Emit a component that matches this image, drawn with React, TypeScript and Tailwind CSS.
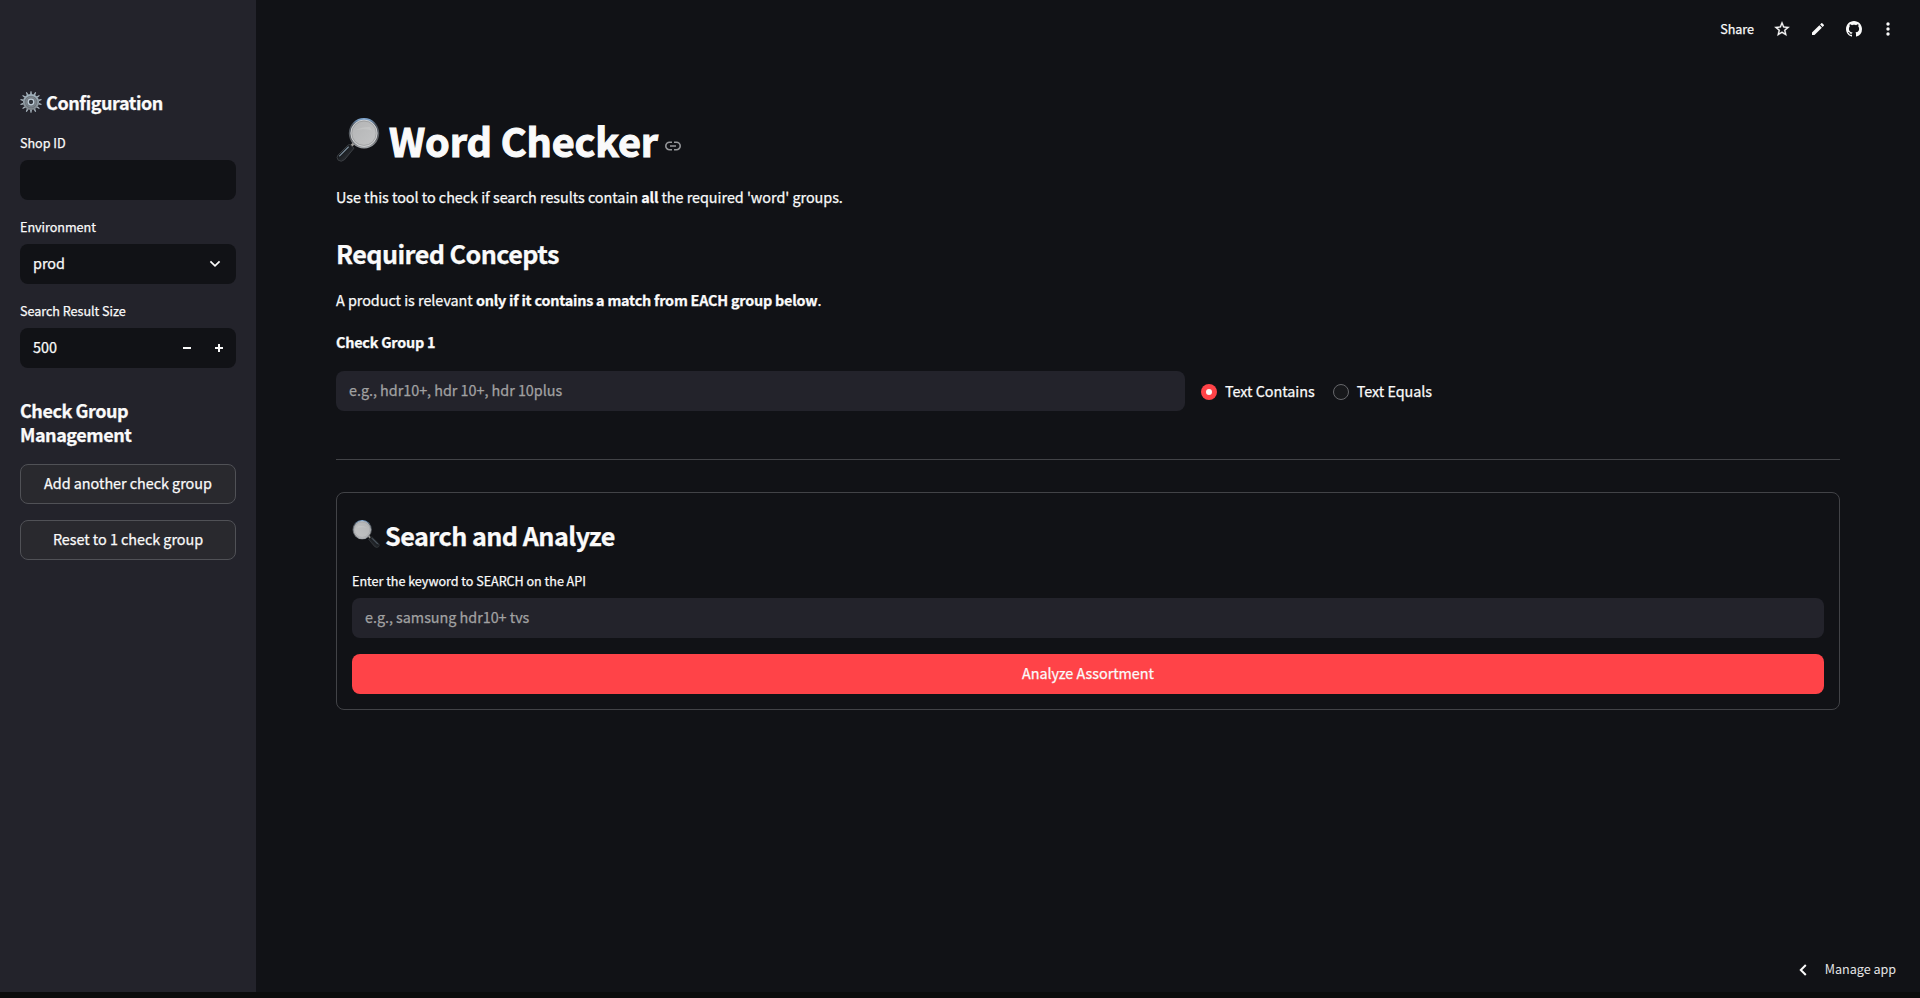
import React from "react";

const TEXT = "font-['Noto_Sans_CJK_SC','Noto_Sans_CJK_JP',sans-serif] [-webkit-text-stroke:0.25px] tracking-[-0.035px]";

function Magnifier({ id, className, flip = false }: { id: string; className: string; flip?: boolean }) {
  return (
    <svg viewBox="0 0 44 44" className={className} aria-hidden="true">
      <defs>
        <linearGradient id={`${id}-rim`} x1="0" y1="0" x2="0" y2="1">
          <stop offset="0" stopColor="#7fa6cf" />
          <stop offset="0.2" stopColor="#4d555f" />
          <stop offset="0.7" stopColor="#5d6064" />
          <stop offset="1" stopColor="#a0a3a7" />
        </linearGradient>
        <linearGradient id={`${id}-glass`} x1="0" y1="0" x2="1" y2="1">
          <stop offset="0" stopColor="#b2b3b4" />
          <stop offset="1" stopColor="#c4c5c6" />
        </linearGradient>
        <linearGradient id={`${id}-grip`} x1="0" y1="0" x2="1" y2="1">
          <stop offset="0" stopColor="#6a7682" />
          <stop offset="0.35" stopColor="#15181c" />
          <stop offset="1" stopColor="#3c3f44" />
        </linearGradient>
      </defs>
      <g transform={flip ? "matrix(-1 0 0 1 44 0)" : undefined}>
        <path d="M18.5 24.5 L13.5 30" stroke="#a09d99" strokeWidth="2.6" />
        <path d="M14.6 27 L18 30.2 L8.6 41.6 Q5.2 44.6 2.2 42.2 Q0 39.4 2 37 L12.2 27 Q13.4 26.2 14.6 27Z" fill={`url(#${id}-grip)`} stroke="#3d4145" strokeWidth="0.9" />
        <path d="M3.6 37.8 L12.4 29" stroke="#7f919f" strokeWidth="1.1" strokeLinecap="round" />
        <circle cx="28" cy="15.2" r="14.2" fill={`url(#${id}-glass)`} stroke={`url(#${id}-rim)`} strokeWidth="2" />
        <circle cx="28" cy="15.2" r="13.2" fill="none" stroke="#dedfe1" strokeWidth="0.7" />
        <circle cx="28" cy="15.2" r="12.2" fill="none" stroke="#8f9092" strokeWidth="0.6" />
        <path d="M20 12.2 Q26 8.6 34 9 L36 12.5 Q27 10.4 20 12.2Z" fill="#c8c9c9" opacity="0.6" />
      </g>
    </svg>
  );
}

function Gear() {
  const teeth = Array.from({ length: 14 }, (_, i) => (i * 360) / 14);
  return (
    <svg viewBox="0 0 22 22" className="h-[22px] w-[22px] shrink-0" aria-hidden="true">
      <defs>
        <linearGradient id="gear-body" x1="0" y1="0" x2="0" y2="1">
          <stop offset="0" stopColor="#a3b4bf" />
          <stop offset="1" stopColor="#80878d" />
        </linearGradient>
      </defs>
      {teeth.map((a) => (
        <path key={a} d="M10.1 3.2 L10.5 0.2 H11.5 L11.9 3.2Z" fill="#a9b5be" transform={`rotate(${a} 11 11)`} />
      ))}
      <circle cx="11" cy="11" r="7.2" fill="#6b737b" stroke="url(#gear-body)" strokeWidth="1.8" />
      <circle cx="11" cy="11" r="4.9" fill="none" stroke="#868e96" strokeWidth="0.8" />
      <circle cx="11" cy="11" r="2.8" fill="#30343c" stroke="#bccad5" strokeWidth="1.3" />
    </svg>
  );
}

function Label({ children }: { children: React.ReactNode }) {
  return <div className="mb-1 h-6 text-[12.6px] leading-[21px]">{children}</div>;
}

export default function App() {
  return (
    <div className={`flex h-[998px] w-[1920px] flex-col overflow-hidden bg-[#0b0c0c] text-[#fafafa] ${TEXT}`}>
      <div className="flex h-[992px] bg-[#111216]">
        <aside className="w-64 shrink-0 bg-[#23232b] px-5 pt-[90px]">
          <h2 className="flex h-6 items-center gap-1 text-[18px] leading-6 font-bold tracking-[-0.42px]">
            <Gear />
            <span>Configuration</span>
          </h2>
          <div className="mt-[18px]">
            <Label>Shop ID</Label>
            <div className="h-10 rounded-lg bg-[#111216]" />
          </div>
          <div className="mt-4">
            <Label>Environment</Label>
            <div className="flex h-10 items-center justify-between rounded-lg bg-[#111216] pr-[15px] pl-[13px] text-[14.4px] leading-6">
              <span className="mb-0.5">prod</span>
              <svg viewBox="0 0 12 8" className="h-2 w-3" fill="none" stroke="#fafafa" strokeWidth="1.7">
                <path d="M1.4 1.3 L6 5.9 L10.6 1.3" />
              </svg>
            </div>
          </div>
          <div className="mt-4">
            <Label>Search Result Size</Label>
            <div className="flex h-10 items-center rounded-lg bg-[#111216] pr-[13px] pl-[13px] text-[14.4px] leading-6">
              <span className="mb-0.5 flex-1">500</span>
              <svg viewBox="0 0 8 8" className="mr-6 h-2 w-2" fill="#fafafa">
                <path d="M0 3h8v2H0z" />
              </svg>
              <svg viewBox="0 0 8 8" className="h-2 w-2" fill="#fafafa">
                <path d="M0 3h3V0h2v3h3v2H5v3H3V5H0z" />
              </svg>
            </div>
          </div>
          <h3 className="mt-[30px] mb-[18px] w-40 text-[18px] leading-6 font-bold tracking-[-0.45px]">Check Group Management</h3>
          <button className="mb-4 block h-10 w-full rounded-lg border border-[#505156] bg-[#29292e] pb-[3px] text-[14.4px] leading-6">
            Add another check group
          </button>
          <button className="block h-10 w-full rounded-lg border border-[#505156] bg-[#29292e] pb-[3px] text-[14.4px] leading-6">
            Reset to 1 check group
          </button>
        </aside>

        <main className="flex min-w-0 flex-1 flex-col">
          <header className="flex h-[58px] shrink-0 items-center justify-end pr-[23px]">
            <span className="mr-[19px] text-[12.6px] leading-6">Share</span>
            <svg viewBox="0 0 24 24" className="mr-[19px] h-[18px] w-[18px]" fill="#fafafa" stroke="#fafafa" strokeWidth="0.4">
              <path d="M22 9.24l-7.19-.62L12 2 9.19 8.63 2 9.24l5.46 4.73L5.82 21 12 17.27 18.18 21l-1.63-7.03L22 9.24zM12 15.4l-3.76 2.27 1-4.28-3.32-2.88 4.38-.38L12 6.1l1.71 4.04 4.38.38-3.32 2.88 1 4.28L12 15.4z" />
            </svg>
            <svg viewBox="0 0 24 24" className="mr-[20px] h-4 w-4" fill="#fafafa">
              <path d="M3 17.25V21h3.75L17.81 9.94l-3.75-3.75L3 17.25zM20.71 7.04a1 1 0 0 0 0-1.41l-2.34-2.34a1 1 0 0 0-1.41 0l-1.83 1.83 3.75 3.75 1.83-1.83z" />
            </svg>
            <svg viewBox="0 0 16 16" className="mr-[17px] h-4 w-4" fill="#fafafa">
              <path d="M8 0C3.58 0 0 3.58 0 8c0 3.54 2.29 6.53 5.47 7.59.4.07.55-.17.55-.38 0-.19-.01-.82-.01-1.49-2.01.37-2.53-.49-2.69-.94-.09-.23-.48-.94-.82-1.13-.28-.15-.68-.52-.01-.53.63-.01 1.08.58 1.23.82.72 1.21 1.87.87 2.33.66.07-.52.28-.87.51-1.07-1.78-.2-3.64-.89-3.64-3.95 0-.87.31-1.59.82-2.15-.08-.2-.36-1.02.08-2.12 0 0 .67-.21 2.2.82.64-.18 1.32-.27 2-.27s1.36.09 2 .27c1.53-1.04 2.2-.82 2.2-.82.44 1.1.16 1.92.08 2.12.51.56.82 1.27.82 2.15 0 3.07-1.87 3.75-3.65 3.95.29.25.54.73.54 1.48 0 1.07-.01 1.93-.01 2.2 0 .21.15.46.55.38A8.01 8.01 0 0 0 16 8c0-4.42-3.58-8-8-8z" />
            </svg>
            <svg viewBox="0 0 18 18" className="h-[18px] w-[18px]" fill="#fafafa">
              <circle cx="9" cy="4" r="1.7" />
              <circle cx="9" cy="9" r="1.7" />
              <circle cx="9" cy="14" r="1.7" />
            </svg>
          </header>

          <section className="flex flex-1 flex-col px-20 pt-[54px]">
            <h1 className="flex h-[60px] text-[39.6px] leading-[55px] font-bold tracking-[-0.12px] [-webkit-text-stroke:1.1px]">
              <Magnifier id="title" className="mt-[6px] mr-[9px] h-11 w-11 shrink-0" />
              <span>Word Checker</span>
              <svg viewBox="0 0 16 10" className="mt-[29px] ml-[7px] h-[10px] w-4" fill="none" stroke="#96979a" strokeWidth="1.6">
                <path d="M7 1.2H4.6a3.8 3.8 0 0 0 0 7.6H7M9 1.2h2.4a3.8 3.8 0 0 1 0 7.6H9M5 5h6" />
              </svg>
            </h1>
            <p className="mt-[13px] h-6 text-[14.4px] leading-6">
              Use this tool to check if search results contain <b className="tracking-[-0.2px]">all</b> the required 'word' groups.
            </p>
            <h2 className="mt-[27px] h-9 text-[25.2px] leading-[35px] font-bold tracking-[-0.57px]">Required Concepts</h2>
            <p className="mt-4 h-6 text-[14.4px] leading-6">
              A product is relevant <b className="tracking-[-0.22px]">only if it contains a match from EACH group below</b>.
            </p>
            <p className="mt-[18px] h-6 text-[14.4px] leading-6 font-bold tracking-[-0.22px]">Check Group 1</p>
            <div className="mt-[17px] flex h-10 items-center text-[14.4px] leading-6">
              <div className="h-10 w-[849px] rounded-lg bg-[#23232b] px-[13px] leading-[38px] text-[#a1a1a2]">
                e.g., hdr10+, hdr 10+, hdr 10plus
              </div>
              <div className="mt-[2px] ml-4 flex h-4 w-4 items-center justify-center rounded-full bg-[#ff4348]">
                <div className="h-1.5 w-1.5 rounded-full bg-[#fafafa]" />
              </div>
              <span className="ml-2">Text Contains</span>
              <div className="mt-[2px] ml-[18px] h-4 w-4 rounded-full border border-[#66676b] bg-[#17181b]" />
              <span className="ml-2">Text Equals</span>
            </div>
            <hr className="mt-12 h-px border-0 bg-[#424347]" />
            <div className="mt-8 h-[218px] rounded-lg border border-[#424347] px-[15px] pt-[25px]">
              <h2 className="flex h-9 text-[25.2px] leading-[35px] font-bold tracking-[-0.54px]">
                <Magnifier id="search" flip className="mt-[2px] mr-[5px] h-7 w-7 shrink-0" />
                <span>Search and Analyze</span>
              </h2>
              <div className="mt-[16px]">
                <Label>Enter the keyword to SEARCH on the API</Label>
                <div className="h-10 rounded-lg bg-[#23232b] px-[13px] text-[14.4px] leading-[38px] text-[#a1a1a2]">
                  e.g., samsung hdr10+ tvs
                </div>
              </div>
              <button className="mt-4 block h-10 w-full rounded-lg bg-[#ff4348] pb-[3px] text-[14.4px] leading-6">Analyze Assortment</button>
            </div>
          </section>

          <footer className="flex h-[45px] shrink-0 items-center justify-end pr-6 text-[12.6px] [-webkit-text-stroke:0px]">
            <svg viewBox="0 0 8 12" className="mr-[18px] h-3 w-2" fill="none" stroke="#fafafa" strokeWidth="2">
              <path d="M6.8 1 L1.8 6 L6.8 11" />
            </svg>
            <span className="text-[#e4e4e5]">Manage app</span>
          </footer>
        </main>
      </div>
    </div>
  );
}
